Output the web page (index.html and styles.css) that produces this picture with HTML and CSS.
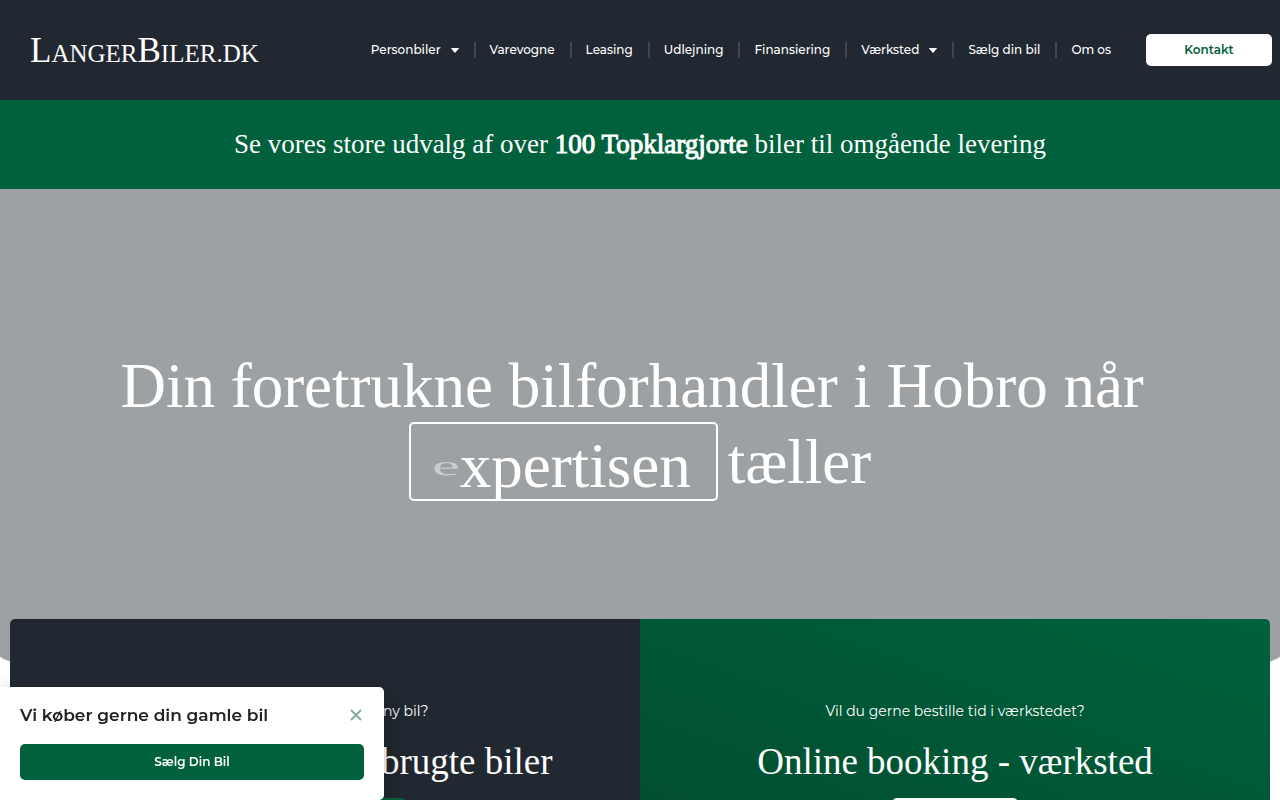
FILE: index.html
```html
<!DOCTYPE html>
<html lang="da">
<head>
    <meta charset="utf-8">
    <meta name="viewport" content="width=device-width, initial-scale=1">
    <title>LangerBiler.dk</title>
    <link rel="stylesheet" href="styles.css">
</head>
<body>

    <!-- Header -->
    <header class="site-header">
        <a class="logo" href="#"><span class="cap">L</span>ANGER<span class="cap">B</span>ILER.DK</a>
        <nav class="main-nav">
            <ul>
                <li><a href="#">Personbiler <svg class="caret" viewBox="0 0 8 5"><path d="M0.6 0h6.8q0.9 0 0.3 0.8L4.5 4.4q-0.5 0.5-1 0L0.3 0.8Q-0.3 0 0.6 0z"/></svg></a></li>
                <li><a href="#">Varevogne</a></li>
                <li><a href="#">Leasing</a></li>
                <li><a href="#">Udlejning</a></li>
                <li><a href="#">Finansiering</a></li>
                <li><a href="#">Værksted <svg class="caret" viewBox="0 0 8 5"><path d="M0.6 0h6.8q0.9 0 0.3 0.8L4.5 4.4q-0.5 0.5-1 0L0.3 0.8Q-0.3 0 0.6 0z"/></svg></a></li>
                <li><a href="#">Sælg din bil</a></li>
                <li><a href="#">Om os</a></li>
            </ul>
        </nav>
        <a class="btn btn-light btn-contact" href="#">Kontakt</a>
    </header>

    <!-- USP bar -->
    <section class="usp">
        <p>Se vores store udvalg af over <strong>100 Topklargjorte</strong> biler til omgående levering</p>
    </section>

    <!-- Hero -->
    <section class="hero">
        <h1>Din foretrukne bilforhandler i Hobro når&nbsp; <span class="word"><span class="letter-in">e</span>xpertisen</span>tæller</h1>
    </section>

    <!-- Boxes -->
    <section class="boxes">
        <div class="box box-dark">
            <p>Står du og mangler en ny bil?</p>
            <h2>Se vores udvalg af brugte biler</h2>
            <a class="btn btn-green btn-wide" href="#">Se brugte biler</a>
        </div>
        <div class="box box-green">
            <p>Vil du gerne bestille tid i værkstedet?</p>
            <h2>Online booking - værksted</h2>
            <a class="btn btn-light" href="#">Book tid</a>
        </div>
    </section>

    <!-- Popup -->
    <aside class="popup">
        <div class="popup-top">
            <h3>Vi køber gerne din gamle bil</h3>
            <button class="close" type="button" aria-label="Luk">
                <svg viewBox="0 0 12 12"><path d="M1 1l10 10M11 1L1 11"/></svg>
            </button>
        </div>
        <a class="btn btn-green" href="#">Sælg Din Bil</a>
    </aside>

</body>
</html>
```

FILE: styles.css
```css
* {
    box-sizing: border-box;
}
body {
    margin: 0;
    background: #fff;
    color: #fff;
    font-family: Montserrat, Inter, sans-serif;
    overflow-x: hidden;
    scrollbar-width: none;
}
a {
    color: inherit;
    text-decoration: none;
}
h1, h2, h3, p {
    margin: 0;
}

/* Header */
.site-header {
    display: flex;
    align-items: center;
    height: 100px;
    padding: 0 8px 0 30px;
    background: #222831;
}
.logo {
    margin-right: auto;
    padding-top: 4px;
    font-family: "Liberation Serif", serif;
    font-size: 25px;
    line-height: 36px;
}
.logo .cap {
    font-size: 35px;
}
.main-nav ul {
    display: flex;
    margin: 0 20px 0 0;
    padding: 0;
    list-style: none;
}
.main-nav li {
    display: flex;
    align-items: center;
}
.main-nav li + li::before {
    content: "";
    width: 2px;
    height: 16px;
    background: #3a4a4a;
}
.main-nav a {
    display: flex;
    align-items: center;
    gap: 10px;
    padding: 0 15px 0 14px;
    font-size: 12px;
    font-weight: 500;
    line-height: 20px;
}
.caret {
    width: 8px;
    height: 5px;
    fill: #fff;
}

/* Buttons */
.btn {
    display: block;
    border-radius: 5px;
    font-size: 12px;
    font-weight: 600;
    text-align: center;
}
.btn-light {
    background: #fff;
    color: #00613c;
}
.btn-green {
    background: #00613c;
    color: #fff;
}
.btn-contact {
    width: 126px;
    line-height: 32px;
}

/* USP bar */
.usp {
    padding: 26px 20px 27px;
    background: #00613c;
    font-family: "Liberation Serif", serif;
    font-size: 27px;
    line-height: 36px;
    text-align: center;
}
.usp strong {
    font-weight: 400;
    -webkit-text-stroke: 1px #fff;
}

/* Hero */
.hero {
    margin: 0 -15px;
    padding: 161px 115px 162px;
    background: #9da1a3;
    border-radius: 0 0 35px 35px;
    text-align: center;
}
.hero h1 {
    max-width: 1060px;
    margin: 0 auto;
    font-family: "Liberation Serif", serif;
    font-size: 63px;
    font-weight: 400;
    line-height: 72px;
}
.word {
    display: inline-block;
    margin-right: 10px;
    padding: 9px 25px 0 21px;
    border: 2px solid #fff;
    border-radius: 5px;
    line-height: 66px;
    vertical-align: -4px;
}
.letter-in {
    display: inline-block;
    opacity: .45;
    transform: rotateX(64deg);
}

/* Boxes */
.boxes {
    display: grid;
    grid-template-columns: 1fr 1fr;
    margin: -44px 10px 0;
    border-radius: 5px;
    overflow: hidden;
}
.box {
    display: flex;
    flex-direction: column;
    align-items: center;
    padding: 80px 20px;
    text-align: center;
}
.box-dark {
    background: #222831;
}
.box-green {
    background: linear-gradient(200deg, #00613c 0%, #004a2d 100%);
}
.box p {
    font-size: 14px;
    line-height: 24px;
}
.box h2 {
    margin: 19px 0 16px;
    font-family: "Liberation Serif", serif;
    font-size: 37px;
    font-weight: 400;
    line-height: 40px;
}
.box .btn {
    width: 126px;
    line-height: 36px;
}
.box .btn-wide {
    width: 162px;
}

/* Popup */
.popup {
    position: fixed;
    left: 0;
    bottom: 0;
    width: 384px;
    padding: 16px 20px 20px;
    background: #fff;
    border-radius: 0 5px 5px 0;
    box-shadow: 2px 8px 23px 3px rgba(0, 0, 0, .2);
    color: #222;
}
.popup-top {
    display: flex;
    align-items: center;
    justify-content: space-between;
    margin-bottom: 17px;
}
.popup h3 {
    font-size: 17px;
    font-weight: 600;
    line-height: 24px;
}
.popup .btn {
    line-height: 36px;
}
.close {
    display: flex;
    padding: 2px;
    background: none;
    border: 0;
    cursor: pointer;
}
.close svg {
    width: 12px;
    height: 12px;
    fill: none;
    stroke: #80b09d;
    stroke-width: 2;
}
```
